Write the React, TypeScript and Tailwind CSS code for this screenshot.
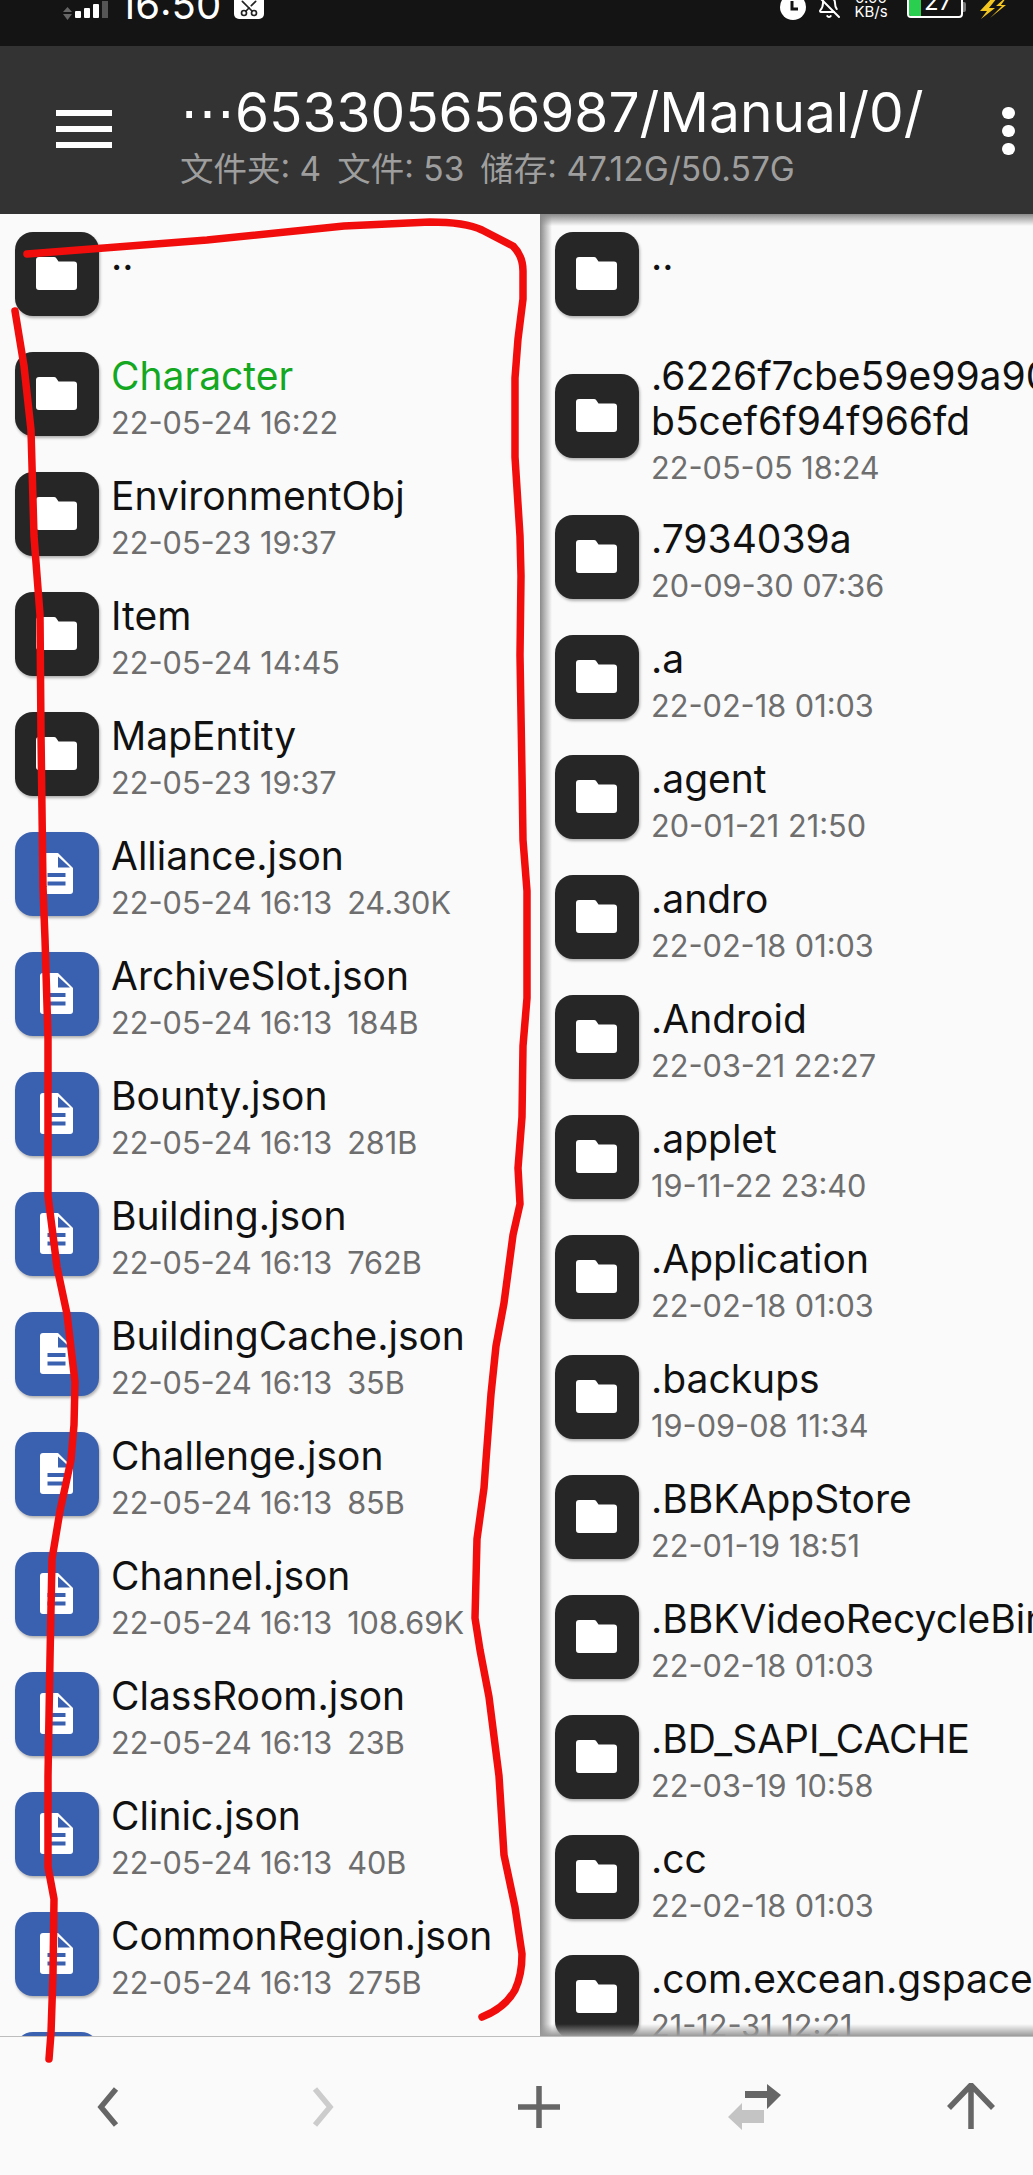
import React from 'react';
import { Scissors, BellOff } from 'lucide-react';

type Entry = { name: string; date?: string; size?: string; green?: boolean; file?: boolean; lines?: string[] };

const leftItems: Entry[] = [
  { name: '..' },
  { name: 'Character', date: '22-05-24 16:22', green: true },
  { name: 'EnvironmentObj', date: '22-05-23 19:37' },
  { name: 'Item', date: '22-05-24 14:45' },
  { name: 'MapEntity', date: '22-05-23 19:37' },
  { name: 'Alliance.json', date: '22-05-24 16:13', size: '24.30K', file: true },
  { name: 'ArchiveSlot.json', date: '22-05-24 16:13', size: '184B', file: true },
  { name: 'Bounty.json', date: '22-05-24 16:13', size: '281B', file: true },
  { name: 'Building.json', date: '22-05-24 16:13', size: '762B', file: true },
  { name: 'BuildingCache.json', date: '22-05-24 16:13', size: '35B', file: true },
  { name: 'Challenge.json', date: '22-05-24 16:13', size: '85B', file: true },
  { name: 'Channel.json', date: '22-05-24 16:13', size: '108.69K', file: true },
  { name: 'ClassRoom.json', date: '22-05-24 16:13', size: '23B', file: true },
  { name: 'Clinic.json', date: '22-05-24 16:13', size: '40B', file: true },
  { name: 'CommonRegion.json', date: '22-05-24 16:13', size: '275B', file: true },
  { name: 'Config.json', date: '22-05-24 16:13', size: '64B', file: true },
];

const rightItems: Entry[] = [
  { name: '..' },
  { name: '.6226f7cbe59e99a90', lines: ['.6226f7cbe59e99a90', 'b5cef6f94f966fd'], date: '22-05-05 18:24' },
  { name: '.7934039a', date: '20-09-30 07:36' },
  { name: '.a', date: '22-02-18 01:03' },
  { name: '.agent', date: '20-01-21 21:50' },
  { name: '.andro', date: '22-02-18 01:03' },
  { name: '.Android', date: '22-03-21 22:27' },
  { name: '.applet', date: '19-11-22 23:40' },
  { name: '.Application', date: '22-02-18 01:03' },
  { name: '.backups', date: '19-09-08 11:34' },
  { name: '.BBKAppStore', date: '22-01-19 18:51' },
  { name: '.BBKVideoRecycleBin', date: '22-02-18 01:03' },
  { name: '.BD_SAPI_CACHE', date: '22-03-19 10:58' },
  { name: '.cc', date: '22-02-18 01:03' },
  { name: '.com.excean.gspace', date: '21-12-31 12:21' },
];

const FolderIcon = () => (
  <div className="w-[84px] h-[84px] shrink-0 rounded-[18px] bg-[#262626] shadow-[1px_2px_3px_rgba(0,0,0,0.3)]">
    <svg viewBox="0 0 84 84" className="w-full h-full">
      <path d="M24 25h15c1 0 1.800.4 2.300 1.200L43.500 29.500H59a3 3 0 0 1 3 3V55a3 3 0 0 1-3 3H24a3 3 0 0 1-3-3V28a3 3 0 0 1 3-3z" fill="#fff" />
    </svg>
  </div>
);

const FileIcon = () => (
  <div className="w-[84px] h-[84px] shrink-0 rounded-[18px] bg-[#3a60b0] shadow-[1px_2px_3px_rgba(0,0,0,0.3)]">
    <svg viewBox="0 0 84 84" className="w-full h-full">
      <path d="M28 21h15L58 36v23a3 3 0 0 1-3 3H28a3 3 0 0 1-3-3V24a3 3 0 0 1 3-3z" fill="#fff" />
      <path d="M43 24.500V35.500H55z" fill="#3a60b0" />
      <rect x="32.500" y="41" width="18" height="4" fill="#3a60b0" />
      <rect x="32.500" y="49.500" width="18" height="4" fill="#3a60b0" />
    </svg>
  </div>
);

const Row = ({ item }: { item: Entry }) => (
  <div className={`flex items-center gap-[12px] pl-[15px] ${item.lines ? 'h-[163px]' : 'h-[120px]'}`}>
    {item.file ? <FileIcon /> : <FolderIcon />}
    <div className="self-start pt-[19px] whitespace-nowrap">
      {(item.lines ?? [item.name]).map((line) => (
        <div key={line} className={`text-[39px] leading-[45px] ${item.green ? 'text-[#13a81f]' : 'text-[#111111]'}`}>
          {line}
        </div>
      ))}
      {item.date && (
        <div className="text-[30.700px] leading-[43px] mt-[3px] text-[#6e6e6e]">
          {item.date}
          {item.size && <span className="ml-[15px]">{item.size}</span>}
        </div>
      )}
    </div>
  </div>
);

const StatusBar = () => (
  <div className="h-[46px] shrink-0 bg-[#141414] flex items-start overflow-hidden text-white">
    {/* signal */}
    <svg width="48" height="22" viewBox="0 0 48 22" className="ml-[63px]">
      <path d="M0 12 L4.500 7 L9 12z M0 14 H9 L4.500 20z" fill="#666" />
      <rect x="12" y="11" width="6" height="7" rx="1" fill="#fff" />
      <rect x="21" y="8" width="6" height="10" rx="1" fill="#fff" />
      <rect x="30" y="4" width="6" height="14" rx="1" fill="#fff" />
      <rect x="39" y="1" width="6" height="17" fill="#555" />
    </svg>
    <span className="ml-[8px] -mt-[19px] text-[40px] leading-[48px]">16:50</span>
    <div className="ml-[13px] -mt-[10px] w-[30px] h-[29px] rounded-[5px] bg-white flex items-end justify-center">
      <Scissors size={20} className="text-[#222] -rotate-90 mb-[1px]" />
    </div>
    {/* right side */}
    <div className="ml-auto flex items-start">
      <svg width="26" height="26" viewBox="0 0 26 26" className="-mt-[5px]">
        <circle cx="13" cy="12" r="13" fill="#fff" />
        <path d="M12 6v8h6" fill="none" stroke="#141414" strokeWidth="3" />
      </svg>
      <BellOff size={24} className="ml-[11px] -mt-[5px]" />
      <div className="ml-[11px] -mt-[9px] w-[38px] text-[15px] leading-[14px] text-center">
        <div>0.00</div>
        <div>KB/s</div>
      </div>
      <div className="ml-[17px] -mt-[8px] w-[56px] h-[26px] rounded-[4px] border-2 border-white relative overflow-hidden">
        <div className="w-[12px] h-full bg-[#2bcf4f]" />
        <span className="absolute left-[15px] -top-[6px] text-[24px] leading-[28px]">27</span>
      </div>
      <div className="w-[3px] h-[10px] mt-[2px] bg-[#777] rounded-r-[2px]" />
      <svg width="28" height="20" viewBox="0 0 28 20" className="ml-[12px] mr-[27px]">
        <path d="M14 -2 L2 11 H9 L3 19 L17 8 H11 L19 -2z M27 -2 L18 6 H24 L12 18 L28 5 H23 L28 -2z" fill="#f2c521" />
      </svg>
    </div>
  </div>
);

const TopBar = () => (
  <div className="h-[168px] shrink-0 bg-[#333333] flex items-start relative z-10">
    <div className="ml-[56px] mt-[64px] w-[56px] flex flex-col gap-[10px]">
      <div className="h-[6px] bg-white" />
      <div className="h-[6px] bg-white" />
      <div className="h-[6px] bg-white" />
    </div>
    <div className="ml-[68px] flex-1 min-w-0 whitespace-nowrap">
      <div className="mt-[34px] text-[55px] leading-[64px] text-white">⋯653305656987/Manual/0/</div>
      <div className="flex text-[33.500px] leading-[38px] mt-[6px] text-[#9e9e9e] font-['Inter','Noto_Sans_CJK_SC',sans-serif]">
        <span>文件夹: 4</span>
        <span className="ml-[16px]">文件: 53</span>
        <span className="ml-[16px]">储存: 47.12G/50.57G</span>
      </div>
    </div>
    <div className="mr-[18px] mt-[61px] flex flex-col gap-[6px]">
      <div className="w-[13px] h-[12px] rounded-full bg-white" />
      <div className="w-[13px] h-[12px] rounded-full bg-white" />
      <div className="w-[13px] h-[12px] rounded-full bg-white" />
    </div>
  </div>
);

const BottomBar = () => (
  <div className="h-[139px] shrink-0 bg-[#fafafa] border-t border-[#bdbdbd] flex items-start justify-between pl-[83px] pr-[38px] pt-[46px] relative z-10">
    <svg width="48" height="50" viewBox="0 0 48 50">
      <path d="M33 6 L18 24 L33 42" fill="none" stroke="#666" strokeWidth="5.500" />
    </svg>
    <svg width="48" height="50" viewBox="0 0 48 50">
      <path d="M16 6 L31 24 L16 42" fill="none" stroke="#ccc" strokeWidth="5.500" />
    </svg>
    <svg width="48" height="50" viewBox="0 0 48 50">
      <path d="M24 3V45M3 24H45" fill="none" stroke="#666" strokeWidth="5.500" />
    </svg>
    <svg width="64" height="50" viewBox="0 0 64 50" className="-mx-[8px]">
      <path d="M22 8H44V1L58 12L44 26V15H22z" fill="#666" />
      <path d="M41 27H19V20L5 34L19 47V40H41z" fill="#c4c4c4" />
    </svg>
    <svg width="48" height="50" viewBox="0 0 48 50">
      <path d="M24 46V3M2 25L24 2L46 25" fill="none" stroke="#666" strokeWidth="5.500" />
    </svg>
  </div>
);

export default function App() {
  return (
    <div className="relative w-[1033px] h-[2175px] overflow-hidden flex flex-col bg-[#fafafa] font-['Inter',sans-serif]">
      <StatusBar />
      <TopBar />
      <div className="flex-1 min-h-0 flex">
        <div className="w-[540px] shrink-0 overflow-hidden">
          {leftItems.map((item) => (
            <Row key={item.name} item={item} />
          ))}
        </div>
        <div className="relative flex-1 min-w-0 overflow-hidden">
          {rightItems.map((item) => (
            <Row key={item.name} item={item} />
          ))}
          {/* panel shadows */}
          <div className="absolute inset-y-0 left-0 w-[12px] bg-gradient-to-r from-[#8a8a8a] to-transparent" />
          <div className="absolute inset-x-0 top-0 h-[12px] bg-gradient-to-b from-[#8a8a8a] to-transparent" />
          <div className="absolute inset-x-0 bottom-0 h-[12px] bg-gradient-to-t from-[#9a9a9a] to-transparent" />
        </div>
      </div>
      <BottomBar />
      {/* red pen annotation drawn over the screenshot */}
      <svg className="absolute inset-0 z-20 pointer-events-none" width="1033" height="2175" viewBox="0 0 1033 2175">
        <path
          d="M27 254 L207 240 L344 226 L430 222 Q465 222 482 230 L513 246 Q523 256 523 271 L523 299 L518 339 L515 378 L515 457 L520 536 L521 576 L520 655 L522 774 L523 840 L527 891 L527 998 L523 1046 L522 1117 L518 1168 L520 1204 L513 1235 L504 1303 L496 1346 L491 1394 L486 1460 L484 1488 L477 1539 L475 1618 L480 1650 L489 1697 L499 1776 L504 1855 L515 1907 L522 1954 Q522 1975 515 1990 Q505 2008 482 2017"
          fill="none"
          stroke="#f20d0d"
          strokeWidth="7.500"
          strokeLinecap="round"
          strokeLinejoin="round"
        />
        <path
          d="M15 311 L24 366 L31 430 L34 536 L40 615 L41 734 L43 887 L45 939 L48 1038 L48 1196 L57 1267 L67 1314 L75 1382 L74 1425 L71 1460 L60 1511 L52 1559 L50 1658 L48 1776 L48 1867 L54 1899 L53 1974 L51 2033 L49 2059"
          fill="none"
          stroke="#f20d0d"
          strokeWidth="7.500"
          strokeLinecap="round"
          strokeLinejoin="round"
        />
      </svg>
    </div>
  );
}
